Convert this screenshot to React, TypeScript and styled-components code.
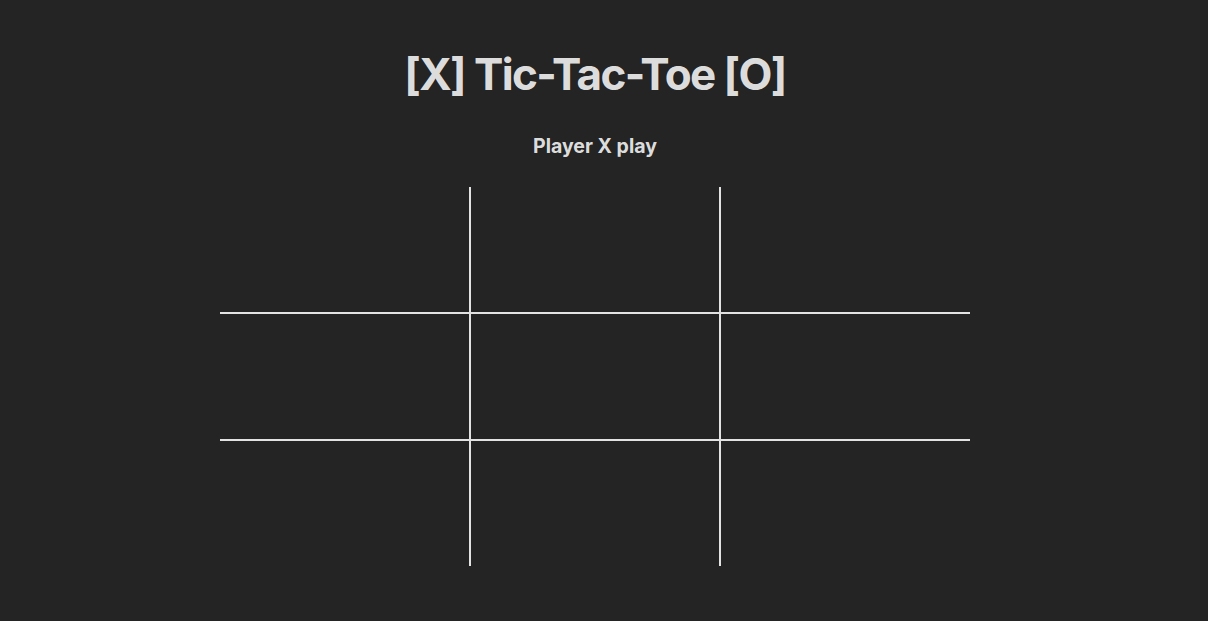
import React from "react";
import styled, { createGlobalStyle } from "styled-components";

const GlobalStyle = createGlobalStyle`
  body {
    margin: 0;
    background-color: #242424;
    color: rgba(255, 255, 255, 0.87);
    font-family: Inter, "Noto Sans", Arial, sans-serif;
  }
`;

const Page = styled.div`
  display: flex;
  flex-direction: column;
  align-items: center;
  padding-right: 18px;
`;

const Title = styled.h1`
  margin: 48px 0 0;
  font-size: 44px;
  font-weight: 700;
  line-height: 53px;
  letter-spacing: -1.6px;
`;

const Status = styled.h3`
  margin: 34px 0 0;
  font-size: 19.5px;
  font-weight: 700;
  line-height: 23px;
`;

const Board = styled.div`
  margin-top: 29px;
  display: grid;
  grid-template-columns: 249px 248px 249px;
  grid-template-rows: repeat(3, 125px);
  gap: 2px;
  background-color: #e3e3e3;
`;

const Square = styled.button`
  border: none;
  padding: 0;
  background-color: #242424;
  color: rgba(255, 255, 255, 0.87);
  font-family: inherit;
  font-size: 64px;
  font-weight: 700;
  cursor: pointer;
`;

export default function App() {
  const [squares, setSquares] = React.useState<(string | null)[]>(
    Array(9).fill(null)
  );
  const [xNext, setXNext] = React.useState(true);

  const handleClick = (i: number) => {
    if (squares[i]) return;
    const next = squares.slice();
    next[i] = xNext ? "X" : "O";
    setSquares(next);
    setXNext(!xNext);
  };

  return (
    <>
      <GlobalStyle />
      <Page>
        <Title>[X] Tic-Tac-Toe [O]</Title>
        <Status>Player {xNext ? "X" : "O"} play</Status>
        <Board>
          {squares.map((value, i) => (
            <Square key={i} onClick={() => handleClick(i)}>
              {value}
            </Square>
          ))}
        </Board>
      </Page>
    </>
  );
}
